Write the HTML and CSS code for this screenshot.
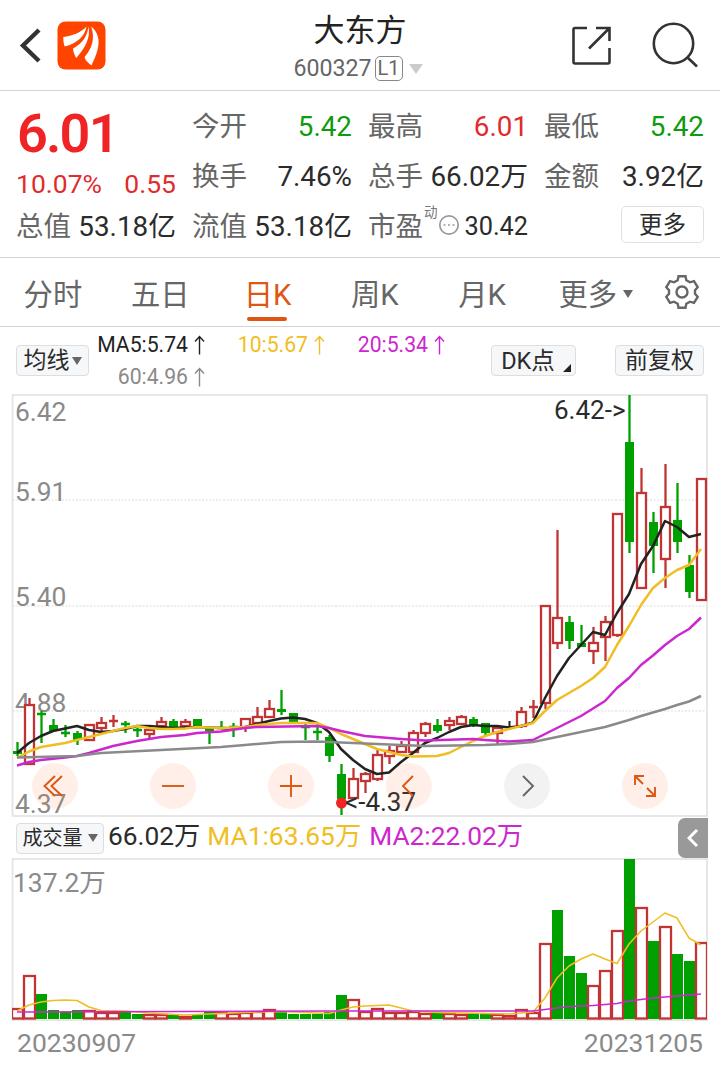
FILE: index.html
```html
<!DOCTYPE html>
<html lang="zh-CN">
<head>
  <meta charset="UTF-8" />
  <title>大东方 600327</title>
  <link rel="stylesheet" href="styles.css">
</head>
<body>

  <!-- Title bar -->
  <header class="topbar">
    <div class="topbar-left">
      <svg class="back" width="22" height="38" viewBox="0 0 22 38"><path d="M20 4L4 19.500L20 35" /></svg>
      <svg class="logo" width="49" height="49" viewBox="0 0 49 49">
        <rect x="0.500" y="0.500" width="48" height="48" rx="8" fill="#ff4400" />
        <path d="M6.300 16C15 15 24 11.500 29.500 5.500C28 15 20 22.500 7.800 25.500C6.600 23 6.200 19 6.300 16Z" fill="#fff" />
        <path d="M31.300 5.500C34 16 28.500 26.500 19.300 37C17.500 34 16.300 31 16 27.500C25.500 22.500 30.500 15 31.300 5.500Z" fill="#fff" />
        <path d="M34 5.500C41.500 11 43 20 40.500 29C39 35 36.500 39.500 34.500 44.500C31.500 42 28.500 40 27.500 36C35 27.500 38.500 17 34 5.500Z" fill="#fff" />
      </svg>
    </div>
    <div class="topbar-title">
      <div class="stock-name">大东方</div>
      <div class="stock-code">600327<span class="level">L1</span><i class="caret"></i></div>
    </div>
    <div class="topbar-right">
      <svg width="40" height="40" viewBox="0 0 40 40"><path d="M16 3H4Q2.500 3 2.500 4.500V37Q2.500 38.500 4 38.500H37Q38.500 38.500 38.500 37V23M25 3H38.500V16M38.500 3L18 23.500" /></svg>
      <svg width="48" height="48" viewBox="0 0 48 48"><circle cx="22.500" cy="22.500" r="19.700" /><path d="M36 36L46 45.500" /></svg>
    </div>
  </header>

  <!-- Quote -->
  <section class="quote">
    <div class="price">6.01</div>
    <div class="change"><span>10.07%</span><span>0.55</span></div>
    <div class="cell c2"><span>今开</span><b class="green">5.42</b></div>
    <div class="cell c3"><span>最高</span><b class="red">6.01</b></div>
    <div class="cell c4"><span>最低</span><b class="green">5.42</b></div>
    <div class="cell c2 r2"><span>换手</span><b>7.46%</b></div>
    <div class="cell c3 r2"><span>总手</span><b>66.02万</b></div>
    <div class="cell c4 r2"><span>金额</span><b>3.92亿</b></div>
    <div class="cell c1 r3"><span>总值</span><b>53.18亿</b></div>
    <div class="cell c2 r3"><span>流值</span><b>53.18亿</b></div>
    <div class="cell c3 r3 pe">
      <span>市盈</span><sup>动</sup>
      <svg width="22" height="22" viewBox="0 0 22 22"><circle cx="11" cy="11" r="9.200" /><path d="M5.500 11h2M10 11h2M14.500 11h2" /></svg>
      <b>30.42</b>
    </div>
    <button class="more">更多</button>
  </section>

  <!-- Period tabs -->
  <nav class="tabs">
    <a>分时</a>
    <a>五日</a>
    <a class="active">日K</a>
    <a>周K</a>
    <a>月K</a>
    <a class="tab-more">更多<i class="caret"></i></a>
    <svg class="gear" width="36" height="36" viewBox="0 0 36 36">
      <path d="M14.500 2.200H21.500L22.300 6.200L26 8.300L30 7.200L33.700 13.200L31 16.200V19.800L33.700 22.800L30 28.800L26 27.700L22.300 29.800L21.500 33.800H14.500L13.700 29.800L10 27.700L6 28.800L2.300 22.800L5 19.800V16.200L2.300 13.200L6 7.200L10 8.300L13.700 6.200Z" />
      <circle cx="18" cy="18" r="5.500" />
    </svg>
  </nav>

  <!-- Moving average values -->
  <section class="ma-bar">
    <button class="chip">均线<i class="caret"></i></button>
    <div class="ma-values">
      <span class="ma5">MA5:5.74<svg class="up" viewBox="0 0 11 20"><path d="M5.500 19.500V1.500M1 6.500L5.500 1.500L10 6.500" /></svg></span>
      <span class="ma10">10:5.67<svg class="up" viewBox="0 0 11 20"><path d="M5.500 19.500V1.500M1 6.500L5.500 1.500L10 6.500" /></svg></span>
      <span class="ma20">20:5.34<svg class="up" viewBox="0 0 11 20"><path d="M5.500 19.500V1.500M1 6.500L5.500 1.500L10 6.500" /></svg></span>
      <span class="ma60">60:4.96<svg class="up" viewBox="0 0 11 20"><path d="M5.500 19.500V1.500M1 6.500L5.500 1.500L10 6.500" /></svg></span>
    </div>
    <button class="chip dk">DK点<i class="corner"></i></button>
    <button class="chip adjust">前复权</button>
  </section>

  <!-- Candles -->
  <section class="kline">
    <svg id="kline" width="720" height="424" viewBox="0 394 720 424"></svg>
    <div class="controls">
      <i><svg viewBox="0 0 46 46"><path d="M23 13L12.500 23L23 33M30 13L19.500 23L30 33" /></svg></i>
      <i><svg viewBox="0 0 46 46"><path d="M12 23H34" /></svg></i>
      <i><svg viewBox="0 0 46 46"><path d="M12 23H34M23 12V34" /></svg></i>
      <i><svg viewBox="0 0 46 46"><path d="M27 13L17 23L27 33" /></svg></i>
      <i class="off"><svg viewBox="0 0 46 46"><path d="M19 13L29 23L19 33" /></svg></i>
      <i><svg viewBox="0 0 46 46"><path d="M13 22V13H22M13 13L21 21M25 25L33 33M24 33H33V24" /></svg></i>
    </div>
  </section>

  <!-- Volume -->
  <section class="vol-bar">
    <button class="chip">成交量<i class="caret"></i></button>
    <span class="vol">66.02万</span>
    <span class="ma10">MA1:63.65万</span>
    <span class="ma20">MA2:22.02万</span>
    <div class="drawer"><svg width="12" height="20" viewBox="0 0 12 20"><path d="M10 2L2 10L10 18" /></svg></div>
  </section>
  <svg id="volume" width="720" height="163" viewBox="0 858 720 163"></svg>
  <footer class="dates"><span>20230907</span><span>20231205</span></footer>

  <script src="chart.js"></script>
</body>
</html>
```
FILE: styles.css
```css
body {
  margin: 0;
  width: 720px;
  height: 1076px;
  overflow: hidden;
  background: #fff;
  color: #2b2b2b;
  font-family: Roboto, "Noto Sans CJK SC", sans-serif;
}

svg {
  display: block;
  fill: none;
}

button {
  font-family: inherit;
  color: #2b2b2b;
  padding: 0;
  box-sizing: border-box;
}

.green { color: #0f9b0f; }
.red { color: #e02c2c; }
.ma5 { color: #222; }
.ma10 { color: #f0be22; }
.ma20 { color: #cc27cf; }
.ma60 { color: #8a8a8a; }

.caret {
  display: inline-block;
  border: 5px solid transparent;
  border-top: 8px solid #666;
  border-bottom: 0;
}

/* Title bar */
.topbar {
  display: grid;
  grid-template-columns: 1fr 1fr 1fr;
  height: 90px;
  border-bottom: 1px solid #d3d3d3;
}

.topbar-left,
.topbar-right {
  display: flex;
  align-items: center;
}

.topbar-left {
  padding-left: 19px;
}

.back {
  stroke: #333;
  stroke-width: 4.4;
  margin-right: 16px;
}

.topbar-right {
  justify-content: flex-end;
  gap: 40px;
  padding-right: 21px;
  stroke: #333;
  stroke-width: 2.6;
}

.topbar-title {
  text-align: center;
}

.stock-name {
  font-size: 31px;
  line-height: 36px;
  margin-top: 13px;
  color: #222;
}

.stock-code {
  display: flex;
  align-items: center;
  justify-content: center;
  margin: 7px 4px 0 0;
  font-size: 23.2px;
  line-height: 25px;
  color: #666;
}

.level {
  box-sizing: border-box;
  width: 28px;
  height: 25px;
  margin: 0 6px 0 3px;
  border: 1.5px solid #888;
  border-radius: 5px;
  font-size: 20px;
  line-height: 22px;
}

.stock-code .caret {
  border-width: 10px 7px 0;
  border-top-color: #ccc;
}

/* Quote */
.quote {
  display: grid;
  grid-template-columns: repeat(4, 1fr);
  grid-template-rows: repeat(3, 50px);
  column-gap: 17px;
  height: 155px;
  padding: 11px 16px 0 17px;
  border-bottom: 1px solid #d3d3d3;
}

.price {
  grid-area: 1 / 1;
  height: 64px;
  font-size: 54px;
  line-height: 64px;
  font-weight: 600;
  letter-spacing: -1.8px;
  color: #f02424;
}

.change {
  grid-area: 2 / 1;
  display: flex;
  justify-content: space-between;
  align-items: center;
  margin-left: -1px;
  padding-top: 13px;
  font-size: 26.5px;
  color: #e02c2c;
}

.cell {
  display: flex;
  justify-content: space-between;
  align-items: center;
  font-size: 27.5px;
  line-height: 50px;
  white-space: nowrap;
}

.cell b {
  font-weight: 400;
  font-size: 27.8px;
}

.cell span {
  color: #666;
  margin-left: -1px;
}

.c1 { grid-column: 1; }
.c2 { grid-column: 2; }
.c3 { grid-column: 3; }
.c4 { grid-column: 4; }
.r2 { grid-row: 2; }
.r3 { grid-row: 3; }

.pe {
  justify-content: flex-start;
}

.cell sup {
  align-self: flex-start;
  margin-left: 1px;
  font-size: 13.5px;
  line-height: 21px;
  color: #777;
}

.pe svg {
  margin: -5px 4px 0 1px;
  stroke: #999;
  stroke-width: 1.7;
}

.pe b { font-size: 25.3px; }

.more {
  grid-area: 3 / 4;
  justify-self: end;
  align-self: center;
  width: 83px;
  height: 37px;
  margin-top: -5px;
  background: #fff;
  border: 1.5px solid #e0e0e0;
  border-radius: 5px;
  font-size: 23.5px;
  line-height: 32px;
}

/* Period tabs */
.tabs {
  display: flex;
  align-items: center;
  height: 68px;
  border-bottom: 1px solid #d3d3d3;
  font-size: 29.3px;
  color: #666;
}

.tabs a {
  box-sizing: border-box;
  width: 107.3px;
  height: 68px;
  line-height: 74px;
  padding-right: 1.5px;
  text-align: center;
}

.tabs .active {
  display: flex;
  flex-direction: column;
  align-items: center;
  color: #dd5713;
}

.tabs .active::after {
  content: "";
  width: 40px;
  height: 4px;
  margin-top: -15px;
  border-radius: 2px;
  background: #dd5713;
}

.tabs .tab-more {
  width: 127.5px;
  padding-left: 22px;
  text-align: left;
  white-space: nowrap;
}

.tab-more .caret {
  margin: 0 0 7px 6px;
}

.gear {
  stroke: #666;
  stroke-width: 2.4;
}

/* Moving average bar */
.ma-bar {
  display: flex;
  align-items: center;
  height: 67px;
  padding: 0 16px;
}

.chip {
  display: flex;
  align-items: center;
  justify-content: center;
  width: 73px;
  height: 31px;
  border: 1px solid #dcdee2;
  border-radius: 4px;
  background: #f6f7f9;
  font-size: 23px;
  line-height: 28px;
  white-space: nowrap;
}

.ma-bar .chip .caret { margin-left: 2px; }

.ma-values {
  display: grid;
  grid-template-columns: 120px 120px 120px;
  margin-left: -4px;
  font-size: 21.2px;
  line-height: 32px;
}

.ma-values span {
  display: flex;
  align-items: center;
  justify-content: flex-end;
}

.up {
  width: 11px;
  height: 20px;
  margin-left: 6px;
  stroke: currentColor;
  stroke-width: 1.4;
}

.dk {
  width: 85px;
  margin-left: auto;
  padding-left: 5px;
  font-size: 23.5px;
}

.corner {
  align-self: flex-end;
  margin: 0 0 3px 8px;
  border-left: 8px solid transparent;
  border-bottom: 8px solid #222;
}

.adjust {
  width: 89px;
  margin-left: 39px;
}

/* Charts */
.kline {
  position: relative;
}

.axis {
  font-size: 26.4px;
  fill: #8a8a8a;
}

.mark {
  font-size: 26px;
  fill: #2b2b2b;
}

.frame {
  stroke: #e3e3e3;
  stroke-width: 1.7;
}

.grid {
  stroke: #e8e8e8;
  stroke-width: 1.4;
  stroke-dasharray: 2 1.5;
}

.up-bar {
  stroke: #c23434;
  stroke-width: 2.3;
}

.hollow { fill: #fff; }

.down-bar {
  stroke: #00a000;
  stroke-width: 2.3;
}

.flat-bar {
  stroke: #222;
  stroke-width: 2;
}

.solid {
  stroke: none;
  fill: #00a000;
}

.line {
  stroke: currentColor;
  stroke-width: 2.5;
  stroke-linejoin: round;
}

.line.thin { stroke-width: 1.5; }

/* Round buttons floating over the candles */
.controls {
  position: absolute;
  left: 32px;
  top: 369px;
  display: flex;
  gap: 72px;
}

.controls i {
  width: 46px;
  height: 46px;
  border-radius: 50%;
  background: rgba(255, 100, 30, 0.1);
  stroke: #dd5713;
  stroke-width: 1.9;
}

.controls .off {
  background: rgba(0, 0, 0, 0.05);
  stroke: #666;
}

/* Volume bar */
.vol-bar {
  display: flex;
  align-items: center;
  height: 40px;
  padding-left: 16px;
  font-size: 26.3px;
  line-height: 36px;
  white-space: nowrap;
}

.vol-bar span { padding-bottom: 4px; }

.vol-bar .chip {
  width: 88px;
  font-size: 20px;
}

.vol-bar .chip .caret { margin-left: 5px; }
.vol-bar .vol { margin-left: 4px; }
.vol-bar .ma10 { margin-left: 7px; }
.vol-bar .ma20 { margin-left: 8px; }

.drawer {
  display: flex;
  align-items: center;
  justify-content: center;
  width: 30px;
  height: 40px;
  margin: 0 12px 0 auto;
  border-radius: 7px 0 0 7px;
  background: #999;
  stroke: #fff;
  stroke-width: 3;
}

.dates {
  display: flex;
  justify-content: space-between;
  padding: 6px 17px 0;
  font-size: 26.5px;
  line-height: 32px;
  color: #8a8a8a;
}
```
FILE: chart.js
```js
const STEP = 12;
const FIRST = 17.5;
const BASE = 1019;

// direction, high, body top, body bottom, low, volume top, volume direction (when it differs)
const candles = [
  ['d', 742, 751, 754, 756, 1008, 'u'], ['u', 698, 704, 765, 765, 975], ['d', 711, 713, 715, 743, 994],
  ['d', 719, 725, 731, 732, 1010], ['d', 725, 732, 734, 737, 1012], ['d', 731, 733, 740, 745, 1010],
  ['u', 724, 724, 741, 741, 1010], ['u', 717, 722, 729, 732, 1012], ['u', 715, 720, 722, 727, 1012],
  ['d', 721, 723, 725, 733, 1012], ['d', 728, 729, 731, 737, 1014], ['u', 727, 729, 735, 739, 1014],
  ['u', 717, 721, 727, 727, 1014], ['d', 719, 721, 727, 727, 1015], ['u', 719, 721, 727, 727, 1016],
  ['d', 719, 719, 727, 727, 1015], ['d', 729, 729, 731, 744, 1012], ['d', 721, 727, 729, 729, 1012, 'u'],
  ['d', 723, 726, 728, 737, 1013, 'u'], ['u', 718, 718, 728, 732, 1012], ['u', 707, 716, 724, 724, 1011],
  ['u', 700, 708, 718, 718, 1009], ['d', 690, 709, 712, 715, 1011], ['d', 713, 713, 722, 724, 1014],
  ['d', 722, 726, 728, 740, 1014], ['d', 727, 731, 733, 740, 1014], ['d', 735, 737, 756, 762, 1012],
  ['d', 764, 774, 799, 815, 995], ['u', 768, 778, 799, 799, 999], ['u', 772, 773, 782, 793, 1011],
  ['u', 749, 754, 780, 781, 1008], ['u', 746, 750, 757, 764, 1012], ['u', 741, 745, 753, 753, 1012],
  ['u', 730, 732, 753, 753, 1011], ['u', 722, 723, 734, 737, 1013], ['d', 719, 725, 731, 733, 1013],
  ['u', 717, 720, 726, 730, 1013], ['u', 715, 716, 725, 725, 1014], ['d', 717, 719, 725, 727, 1013],
  ['d', 723, 723, 733, 736, 1013], ['u', 726, 727, 734, 745, 1014], ['f', 721, 726, 728, 730, 1015, 'u'],
  ['u', 707, 711, 727, 728, 1009], ['u', 700, 706, 708, 718, 1012], ['u', 605, 605, 704, 709, 943],
  ['u', 530, 617, 644, 649, 910, 'd'], ['d', 616, 622, 641, 649, 956], ['d', 625, 643, 647, 647, 973],
  ['u', 627, 642, 652, 664, 985], ['u', 616, 621, 638, 661, 970], ['u', 513, 513, 636, 637, 930],
  ['d', 395, 442, 542, 553, 859], ['u', 468, 492, 589, 589, 907], ['d', 512, 522, 546, 573, 941],
  ['u', 464, 506, 560, 588, 926], ['d', 483, 520, 542, 553, 954], ['d', 555, 565, 592, 598, 961],
  ['u', 478, 478, 601, 601, 942]
];

const ma5 = '17,753 29,743 41,736 53,731 65,728.5 77,726 89,730 101,732 113,731 125,729 137,726 149,726 161,727 173,728 197,727 221,728 233,729 245,727 257,724 269,721 281,718.5 293,717.5 305,719 317,723 329,732 341,749 353,760 365,769 377,774 389,772.5 401,762 413,753 425,743 437,738 449,732 461,727 473,725 485,726 497,726 509,727.5 521,726 533,722.5 545,698 557,676 569,658 581,645 593,632 605,635 617,613 629,594 641,564 653,546 665,521 677,527 689,537 701,534';
const ma10 = '17,758 29,751.5 41,747 53,745 65,743 77,740 89,737 101,734 113,731 125,728 137,726 149,728 161,729 173,729 185,728.5 197,727 221,728 245,727 257,725 281,723 317,723 329,728 341,734 353,739 365,744 377,749 401,755 413,756.5 437,756 449,753 461,747 473,741 485,736 497,732 509,729 533,723 545,711 557,700 569,693 581,686 593,678 605,667 617,645 629,626 641,605 653,588 665,578 677,570 689,565 701,549';
const ma20 = '17,765.5 29,762 41,760 65,757.5 77,756 89,753 113,746 137,741 161,737 185,735 197,733 221,731.5 245,728 257,727 317,726 329,728 341,731 365,736 401,739 425,740.5 473,739 485,740 509,741.5 533,740 557,728 581,716 605,701 617,688 629,678 641,665 653,655.5 665,645 677,636 689,629 701,617.5';
const ma60 = '17,757.5 77,756 101,753 161,750 221,747 245,745 281,742 317,741.5 353,743 425,746 485,745 509,744 533,742 557,737 605,727 629,720 641,716 665,709 677,705 689,701.5 701,696';
const vol1 = '17,1011 29,1005 41,1002 53,1000.5 65,1000 77,1000.5 89,1007 101,1010.5 125,1011 149,1013 185,1015 197,1014.5 221,1013.5 257,1012 281,1011.5 305,1012.5 329,1013.5 341,1010 353,1007 365,1006 389,1005 401,1008 413,1011 437,1012.5 509,1014 533,1012 545,998 557,978 569,966 581,959 593,954 605,959 617,963.5 629,944 641,931 653,922 665,913 677,918 689,938 701,945';
const vol2 = '17,1012 341,1011 533,1011 557,1008 569,1006.5 593,1005.5 617,1003.5 629,1001 653,998 689,995 701,994';

function line(points, cls) {
  return `<polyline class="line ${cls}" points="${points}" />`;
}

function candle(c, i) {
  const [dir, high, top, bottom, low] = c;
  const x = FIRST + i * STEP;
  const cls = { u: 'up-bar', d: 'down-bar', f: 'flat-bar' }[dir];
  const wicks = `<path class="${cls}" d="M${x} ${high}V${top}M${x} ${bottom}V${low}" />`;
  // open and close nearly equal: a plain cross
  if (bottom - top < 3) {
    return `<path class="${cls}" d="M${x} ${high}V${low}M${x - 4.5} ${(top + bottom) / 2}H${x + 4.5}" />`;
  }
  if (dir === 'u') {
    return wicks + `<rect class="up-bar hollow" x="${x - 4.5}" y="${top + 1}" width="9" height="${bottom - top - 2}" />`;
  }
  return wicks + `<rect class="solid" x="${x - 4.5}" y="${top}" width="9" height="${bottom - top}" />`;
}

function volumeBar(c, i) {
  const x = FIRST + i * STEP;
  const top = c[5];
  if ((c[6] || c[0]) === 'u') {
    return `<rect class="up-bar hollow" x="${x - 5.5}" y="${top + 1}" width="11" height="${BASE - top - 1.5}" />`;
  }
  return `<rect class="solid" x="${x - 5.5}" y="${top}" width="11" height="${BASE - top}" />`;
}

document.getElementById('kline').innerHTML = `
  <rect class="frame" x="12.5" y="395" width="694.5" height="421" />
  <path class="grid" d="M13 500H707M13 606H707M13 711H707" />
  <text class="axis" x="15" y="421">6.42</text>
  <text class="axis" x="15" y="501">5.91</text>
  <text class="axis" x="15" y="606">5.40</text>
  <text class="axis" x="15" y="712">4.88</text>
  <text class="axis" x="15" y="813">4.37</text>
  ${candles.map(candle).join('')}
  ${line(ma5, 'ma5')}${line(ma10, 'ma10')}${line(ma20, 'ma20')}${line(ma60, 'ma60')}
  <circle cx="341.5" cy="803" r="5.5" fill="#f02424" />
  <text class="mark" x="554" y="419">6.42-&gt;</text>
  <text class="mark" x="345" y="811">&lt;-4.37</text>`;

document.getElementById('volume').innerHTML = `
  <rect class="frame" x="12.5" y="859" width="694.5" height="161" />
  <text class="axis" x="13" y="892">137.2万</text>
  <clipPath id="plot"><rect x="12" y="858" width="695" height="163" /></clipPath>
  <g clip-path="url(#plot)">${candles.map(volumeBar).join('')}</g>
  ${line(vol1, 'thin ma10')}${line(vol2, 'thin ma20')}`;
```
